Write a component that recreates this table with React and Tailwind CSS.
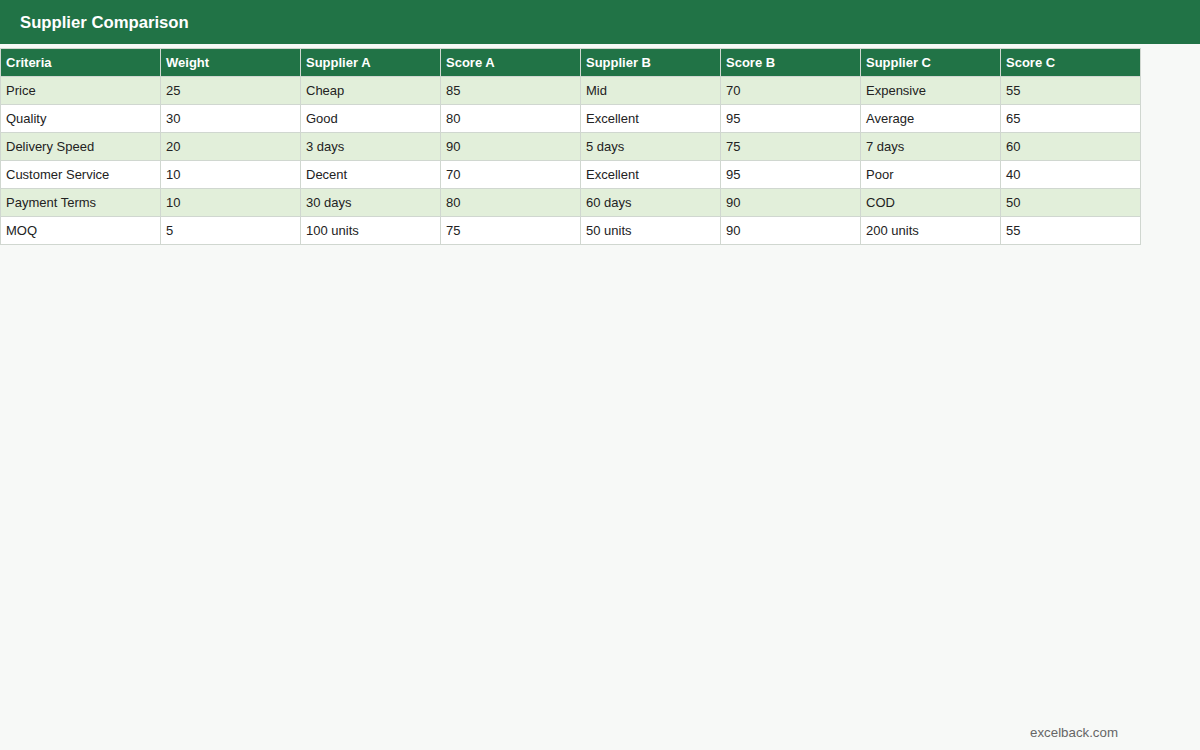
import React from "react";

const cols = ["Criteria", "Weight", "Supplier A", "Score A", "Supplier B", "Score B", "Supplier C", "Score C"];
const rows = [
  ["Price", "25", "Cheap", "85", "Mid", "70", "Expensive", "55"],
  ["Quality", "30", "Good", "80", "Excellent", "95", "Average", "65"],
  ["Delivery Speed", "20", "3 days", "90", "5 days", "75", "7 days", "60"],
  ["Customer Service", "10", "Decent", "70", "Excellent", "95", "Poor", "40"],
  ["Payment Terms", "10", "30 days", "80", "60 days", "90", "COD", "50"],
  ["MOQ", "5", "100 units", "75", "50 units", "90", "200 units", "55"],
];

export default function App() {
  return (
    <div className="w-[1200px] h-[750px] bg-[#f7f9f7] flex flex-col" style={{ fontFamily: '"Liberation Sans", Arial, sans-serif' }}>
      <div className="h-[44px] bg-[#217346] flex items-center px-5 pt-[1px]">
        <h1 className="text-white font-bold text-[16.7px]">Supplier Comparison</h1>
      </div>
      <div className="pt-[4px]">
        <table className="border-collapse text-[13px]">
          <thead>
            <tr className="bg-[#217346] text-white">
              {cols.map((c, i) => (
                <th key={c} className={`${i === 0 ? "w-[160px]" : "w-[140px]"} h-[28px] border border-[#d0d7d0] text-left font-bold px-[5px] py-0`}>
                  {c}
                </th>
              ))}
            </tr>
          </thead>
          <tbody>
            {rows.map((r, ri) => (
              <tr key={ri} className={ri % 2 === 0 ? "bg-[#e2efda]" : "bg-white"}>
                {r.map((v, ci) => (
                  <td key={ci} className="h-[28px] border border-[#d0d7d0] px-[5px] py-0 text-[#222]">
                    {v}
                  </td>
                ))}
              </tr>
            ))}
          </tbody>
        </table>
      </div>
      <div className="flex-1" />
      <div className="flex justify-end pr-[82px] pb-[7px] text-[13.3px] text-[#666]">excelback.com</div>
    </div>
  );
}
